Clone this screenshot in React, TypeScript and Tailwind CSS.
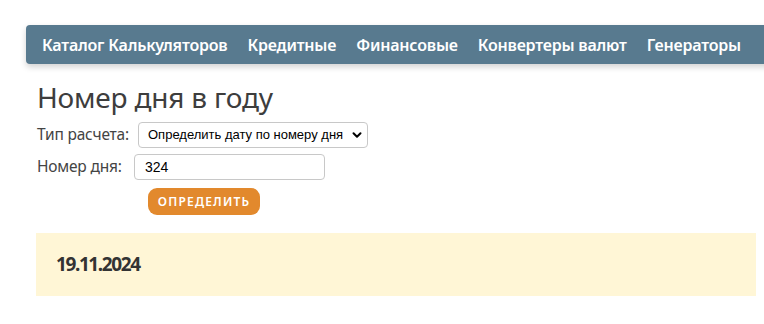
import React from "react";

const navItems = [
  "Каталог Калькуляторов",
  "Кредитные",
  "Финансовые",
  "Конвертеры валют",
  "Генераторы",
];

function Chevron() {
  return (
    <svg width="10" height="10" viewBox="0 0 10 10" className="shrink-0">
      <path d="M1.5 3.2 L5 6.7 L8.5 3.2" fill="none" stroke="#000" strokeWidth="2" strokeLinecap="round" strokeLinejoin="round" />
    </svg>
  );
}

export default function App() {
  return (
    <div className="w-[764px] h-[324px] overflow-hidden bg-white font-['Noto_Sans',sans-serif]">
      <div className="pt-[25px] pl-[26px]">
        <nav className="w-[760px] h-[39px] bg-[#587a8f] rounded-[4px] shadow-[0_3px_6px_rgba(0,0,0,0.18)] flex items-center pl-[16px] gap-[20px]">
          {navItems.map((t) => (
            <span key={t} className="text-white text-[16px] font-semibold whitespace-nowrap tracking-[-0.2px]">
              {t}
            </span>
          ))}
        </nav>
      </div>

      <div className="pl-[37px] pr-[8px]">
        <h1 className="mt-[16px] text-[28px] leading-[34px] text-[#3d3d3d] font-normal tracking-[-0.2px]">Номер дня в году</h1>

        <div className="mt-[8px] flex items-center h-[26px]">
          <span className="text-[15.5px] text-[#444] w-[101px] tracking-[-0.2px]">Тип расчета:</span>
          <div className="w-[230px] h-[26px] border border-[#c8c8c8] rounded-[4px] flex items-center pl-[9px] pr-[5px] justify-between font-['Liberation_Sans',sans-serif] text-[13px] text-black">
            <span className="whitespace-nowrap">Определить дату по номеру дня</span>
            <Chevron />
          </div>
        </div>

        <div className="mt-[6px] flex items-center h-[26px]">
          <span className="text-[15.5px] text-[#444] w-[97px] tracking-[-0.2px]">Номер дня:</span>
          <div className="w-[191px] h-[26px] border border-[#c8c8c8] rounded-[4px] flex items-center pl-[10px] font-['Liberation_Sans',sans-serif] text-[14px] text-black">
            324
          </div>
        </div>

        <div className="mt-[8px] pl-[111px]">
          <button className="w-[112px] h-[27px] rounded-[9px] bg-[#e2892d] text-white text-[12px] font-semibold tracking-[1.2px] flex items-center justify-center">
            ОПРЕДЕЛИТЬ
          </button>
        </div>

        <div className="mt-[18px] -ml-[1px] w-[720px] h-[63px] bg-[#fff6d6] flex items-center pl-[20px]">
          <span className="text-[19px] font-bold text-[#333] tracking-[-1.4px]">19.11.2024</span>
        </div>
      </div>
    </div>
  );
}
